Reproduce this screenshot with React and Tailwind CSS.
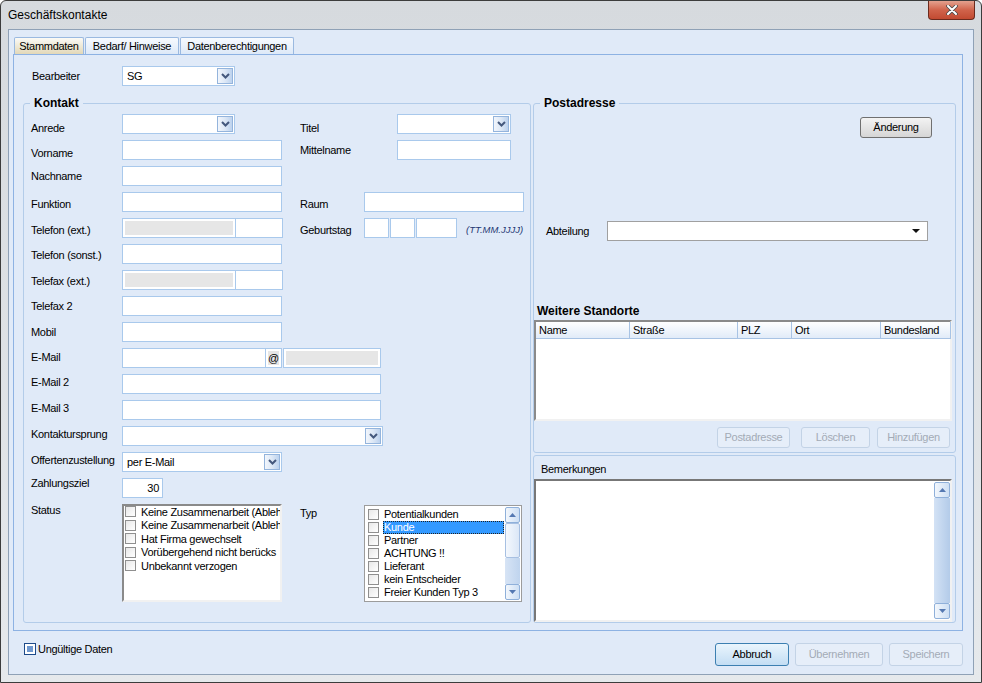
import React from "react";

function Chevron() {
  return (
    <span className="flex h-[16px] w-[16px] shrink-0 items-center justify-center border border-[#94b4dc] bg-gradient-to-r from-[#f2f6fc] via-[#dde8f6] to-[#bcd2ee]">
      <svg width="9" height="6" viewBox="0 0 9 6">
        <path d="M1 1 L4.5 4.5 L8 1" fill="none" stroke="#44587d" strokeWidth="2" />
      </svg>
    </span>
  );
}

function Combo({ className = "", value }) {
  return (
    <div className={`flex h-5 shrink-0 items-center justify-between border border-[#a9c9ec] bg-white pl-[4px] pr-px ${className}`}>
      <span className="leading-none">{value}</span>
      <Chevron />
    </div>
  );
}

function Field({ className = "" }) {
  return <div className={`h-5 shrink-0 border border-[#a9c9ec] bg-white ${className}`} />;
}

function GrayField({ className = "" }) {
  return (
    <div className={`h-5 shrink-0 border border-[#a9c9ec] bg-white p-[2px] ${className}`}>
      <div className="h-full bg-[#e6e6e6]" />
    </div>
  );
}

function Split() {
  return (
    <div className="flex">
      <GrayField className="w-[114px]" />
      <Field className="-ml-px w-[48px]" />
    </div>
  );
}

function Label({ className = "", w = "w-[91px]", children }) {
  return (
    <div className={`shrink-0 whitespace-nowrap leading-[20px] ${w} ${className}`}>
      {children}
    </div>
  );
}

function Arrow({ dir }) {
  return (
    <svg width="7" height="4" viewBox="0 0 7 4">
      <path d={dir === "up" ? "M0 4 L3.5 0 L7 4 Z" : "M0 0 L3.5 4 L7 0 Z"} fill="#5579b2" />
    </svg>
  );
}

function SbButton({ dir }) {
  return (
    <div className="flex h-[16px] w-full shrink-0 items-center justify-center rounded-[2px] border border-[#8fb0da] bg-gradient-to-r from-[#f3f7fc] to-[#cddff4]">
      <Arrow dir={dir} />
    </div>
  );
}

function Box() {
  return (
    <span className="mr-[5px] h-[11px] w-[11px] shrink-0 border border-[#8f8f8f] bg-gradient-to-br from-[#e8e8e8] to-white" />
  );
}

// the list is narrower than the entries, the rest is cut off like in the app
const statusItems = [
  "Keine Zusammenarbeit (Ableh",
  "Keine Zusammenarbeit (Ableh ",
  "Hat Firma gewechselt",
  "Vorübergehend nicht berücks",
  "Unbekannt verzogen",
];

const typItems = [
  "Potentialkunden",
  "Kunde",
  "Partner",
  "ACHTUNG !!",
  "Lieferant",
  "kein Entscheider",
  "Freier Kunden Typ 3",
];

function Legend({ children }) {
  return (
    <legend className="ml-[6px] px-[4px] text-[12px] font-bold leading-[14px] tracking-normal">
      {children}
    </legend>
  );
}

function Btn({ className = "", disabled, children }) {
  return (
    <div
      className={`flex shrink-0 items-center justify-center rounded-[3px] border ${
        disabled
          ? "border-[#c3d3e6] bg-[#e6eef9] text-[#a3abb6]"
          : "border-[#707070] bg-gradient-to-b from-[#f3f3f3] to-[#d6d6d6]"
      } ${className}`}
    >
      {children}
    </div>
  );
}

export default function App() {
  return (
    <div className="flex h-[683px] w-[982px] flex-col rounded-t-[6px] border border-[#3c3c3c] bg-gradient-to-b from-[#d6dade] to-[#e6e9ec] font-['Liberation_Sans',Arial,sans-serif] text-[11px] tracking-[-0.3px] text-black">
      {/* Title bar */}
      <div className="flex h-[28px] shrink-0 justify-between">
        <div className="self-center pl-[7px] text-[12px] tracking-normal">Geschäftskontakte</div>
        <div className="mr-[6px] flex h-[19px] w-[47px] items-center justify-center rounded-b-[4px] border border-t-0 border-[#6b2a1d] bg-gradient-to-b from-[#e3a18f] via-[#d0634b] to-[#c24a31]">
          <svg width="12" height="10" viewBox="0 0 12 10">
            <path d="M2 1 L10 9 M10 1 L2 9" stroke="#4a4a4a" strokeWidth="3.6" strokeLinecap="round" />
            <path d="M2 1 L10 9 M10 1 L2 9" stroke="#ffffff" strokeWidth="2" strokeLinecap="round" />
          </svg>
        </div>
      </div>

      {/* Client */}
      <div className="mx-[7px] mb-[7px] flex flex-1 flex-col border border-[#8fa1b6] bg-[#e0eaf8]">
        {/* Tabs */}
        <div className="flex gap-px pl-[5px] pt-[7px]">
          <div className="flex h-[17px] w-[70px] items-center justify-center rounded-t-[2px] border border-b-0 border-[#9ab9e0] bg-gradient-to-b from-[#fbfaf6] to-[#e2d8b8]">
            Stammdaten
          </div>
          <div className="flex h-[17px] w-[94px] items-center justify-center rounded-t-[2px] border border-b-0 border-[#9ab9e0] bg-gradient-to-b from-[#f7fafe] to-[#dde9f8]">
            Bedarf/ Hinweise
          </div>
          <div className="flex h-[17px] w-[114px] items-center justify-center rounded-t-[2px] border border-b-0 border-[#9ab9e0] bg-gradient-to-b from-[#f7fafe] to-[#dde9f8]">
            Datenberechtigungen
          </div>
        </div>

        {/* Tab panel */}
        <div className="ml-[4px] flex h-[577px] w-[950px] flex-col border border-[#8db2e3] bg-[#e0eaf8] pl-[9px] pr-[6px] pt-[11px]">
          {/* Bearbeiter */}
          <div className="flex h-5 items-start pl-[9px]">
            <Label w="w-[90px]">Bearbeiter</Label>
            <Combo className="w-[113px]" value="SG" />
          </div>

          <div className="mt-[10px] flex gap-[2px]">
            {/* Kontakt */}
            <fieldset className="h-[527px] w-[508px] rounded-[3px] border border-[#b3cce9] p-0">
              <Legend>Kontakt</Legend>
              <div className="flex flex-col gap-[6px] pl-[7px] pt-[4px]">
                <div className="flex h-5 items-start">
                  <Label className="pt-[4px]">Anrede</Label>
                  <div className="w-[178px] shrink-0">
                    <Combo className="w-[113px]" />
                  </div>
                  <Label w="w-[97px]" className="pt-[4px]">Titel</Label>
                  <Combo className="w-[114px]" />
                </div>
                <div className="flex h-5 items-start">
                  <Label className="pt-[3px]">Vorname</Label>
                  <div className="w-[178px] shrink-0">
                    <Field className="w-[160px]" />
                  </div>
                  <Label w="w-[97px]">Mittelname</Label>
                  <Field className="w-[114px]" />
                </div>
                <div className="flex h-5 items-start">
                  <Label>Nachname</Label>
                  <Field className="w-[160px]" />
                </div>
                <div className="flex h-5 items-start">
                  <Label className="pt-[2px]">Funktion</Label>
                  <div className="w-[178px] shrink-0">
                    <Field className="w-[160px]" />
                  </div>
                  <Label w="w-[64px]" className="pt-[2px]">Raum</Label>
                  <Field className="w-[160px]" />
                </div>
                <div className="flex h-5 items-start">
                  <Label className="pt-[2px]">Telefon (ext.)</Label>
                  <div className="w-[178px] shrink-0">
                    <Split />
                  </div>
                  <Label w="w-[64px]" className="pt-[2px]">Geburtstag</Label>
                  <div className="flex gap-px">
                    <Field className="w-[25px]" />
                    <Field className="w-[25px]" />
                    <Field className="w-[41px]" />
                  </div>
                  <span className="ml-[9px] pt-[2px] text-[9.5px] italic leading-[20px] tracking-normal text-[#1e3773]">
                    (TT.MM.JJJJ)
                  </span>
                </div>
                <div className="flex h-5 items-start">
                  <Label className="pt-px">Telefon (sonst.)</Label>
                  <Field className="w-[160px]" />
                </div>
                <div className="flex h-5 items-start">
                  <Label className="pt-px">Telefax (ext.)</Label>
                  <Split />
                </div>
                <div className="flex h-5 items-start">
                  <Label>Telefax 2</Label>
                  <Field className="w-[160px]" />
                </div>
                <div className="flex h-5 items-start">
                  <Label>Mobil</Label>
                  <Field className="w-[160px]" />
                </div>
                <div className="flex h-5 items-start">
                  <Label className="-mt-px">E-Mail</Label>
                  <Field className="w-[144px]" />
                  <div className="h-5 w-[16px] shrink-0 border-y border-r border-[#a9c9ec] bg-white p-[2px]">
                    <div className="flex h-full items-center justify-center bg-[#e6e6e6] tracking-normal">@</div>
                  </div>
                  <GrayField className="ml-px w-[98px]" />
                </div>
                <div className="flex h-5 items-start">
                  <Label className="-mt-[2px]">E-Mail 2</Label>
                  <Field className="w-[259px]" />
                </div>
                <div className="flex h-5 items-start">
                  <Label className="-mt-[2px]">E-Mail 3</Label>
                  <Field className="w-[259px]" />
                </div>
                <div className="flex h-5 items-start">
                  <Label className="-mt-[2px]">Kontaktursprung</Label>
                  <Combo className="w-[261px]" />
                </div>
                <div className="flex h-5 items-start">
                  <Label className="-mt-[2px]">Offertenzustellung</Label>
                  <Combo className="w-[160px]" value="per E-Mail" />
                </div>
                <div className="flex h-5 items-start">
                  <Label className="-mt-[5px]">Zahlungsziel</Label>
                  <div className="flex h-5 w-[41px] items-center justify-end border border-[#a9c9ec] bg-white pr-[3px]">
                    30
                  </div>
                </div>
                <div className="flex items-start">
                  <Label className="!leading-[13px]">Status</Label>
                  <div className="w-[178px] shrink-0">
                    <div className="h-[98px] w-[160px] overflow-hidden border-2 border-b-[#f1f1f1] border-l-[#8a8a8a] border-r-[#f1f1f1] border-t-[#8a8a8a] bg-white pl-px">
                      <div className="-mt-px">
                        {statusItems.map((s, i) => (
                          <div key={i} className="flex h-[13.5px] items-center overflow-hidden whitespace-nowrap">
                            <Box />
                            <span>{s}</span>
                          </div>
                        ))}
                      </div>
                    </div>
                  </div>
                  <Label w="w-[64px]" className="pt-[3px] !leading-[13px]">Typ</Label>
                  <div className="mt-px flex h-[97px] w-[158px] border border-[#9c9c9c] bg-white">
                    <div className="flex-1 overflow-hidden pl-[3px] pt-[2px]">
                      {typItems.map((s) => (
                        <div key={s} className="flex h-[13px] items-center whitespace-nowrap">
                          <Box />
                          <span
                            className={
                              s === "Kunde"
                                ? "-ml-px flex h-[13px] flex-1 items-center border border-dotted border-[#222] bg-[#3399ff] text-white"
                                : ""
                            }
                          >
                            {s}
                          </span>
                        </div>
                      ))}
                    </div>
                    <div className="ml-px flex w-[16px] flex-col py-px pr-px">
                      <SbButton dir="up" />
                      <div className="h-[35px] rounded-[2px] border border-[#a7c0e2] bg-gradient-to-r from-[#f4f8fd] to-[#dbe7f7]" />
                      <div className="flex-1 bg-gradient-to-r from-[#d7e4f5] to-[#bfd4ee]" />
                      <SbButton dir="down" />
                    </div>
                  </div>
                </div>
              </div>
            </fieldset>

            {/* Right column */}
            <div className="flex w-[423px] flex-col gap-[2px]">
              <fieldset className="h-[357px] rounded-[3px] border border-[#b3cce9] p-0">
                <Legend>Postadresse</Legend>
                <div className="flex flex-col">
                  <div className="flex justify-end pr-[23px] pt-[7px]">
                    <Btn className="h-[21px] w-[72px]">Änderung</Btn>
                  </div>
                  <div className="mt-[83px] flex h-5 items-start pl-[12px]">
                    <Label w="w-[61px]">Abteilung</Label>
                    <div className="flex h-5 w-[321px] items-center justify-end border border-[#a0a0a0] bg-white pr-[7px]">
                      <svg width="8" height="4" viewBox="0 0 8 4">
                        <path d="M0 0 L8 0 L4 4 Z" fill="#111" />
                      </svg>
                    </div>
                  </div>
                  <div className="mt-[63px] pl-[3px] text-[12px] font-bold leading-[15px] tracking-normal">
                    Weitere Standorte
                  </div>
                  <div className="mt-px h-[101px] w-[418px] border-2 border-b-[#f1f1f1] border-l-[#8a8a8a] border-r-[#f1f1f1] border-t-[#8a8a8a] bg-white">
                    <div className="flex h-[17px] bg-gradient-to-b from-white to-[#dfeaf8]">
                      {[
                        ["Name", "w-[94px]"],
                        ["Straße", "w-[108px]"],
                        ["PLZ", "w-[54px]"],
                        ["Ort", "w-[89px]"],
                        ["Bundesland", "w-[70px]"],
                      ].map(([t, w]) => (
                        <div
                          key={t}
                          className={`flex shrink-0 items-center border-b border-r border-[#a8c3e4] pl-[3px] ${w}`}
                        >
                          {t}
                        </div>
                      ))}
                    </div>
                  </div>
                  <div className="mt-[6px] flex justify-end gap-[7px] pr-[5px]">
                    <Btn disabled className="mr-[4px] h-[21px] w-[73px]">Postadresse</Btn>
                    <Btn disabled className="h-[21px] w-[69px]">Löschen</Btn>
                    <Btn disabled className="h-[21px] w-[73px]">Hinzufügen</Btn>
                  </div>
                </div>
              </fieldset>

              <div className="flex h-[168px] flex-col rounded-[3px] border border-[#b3cce9]">
                <div className="pl-[7px] pt-[7px] leading-[13px]">Bemerkungen</div>
                <div className="mt-[3px] flex h-[143px] w-[418px] justify-end border-2 border-b-[#f1f1f1] border-l-[#777] border-r-[#f1f1f1] border-t-[#777] bg-white py-px">
                  <div className="flex w-[16px] flex-col">
                    <SbButton dir="up" />
                    <div className="flex-1 bg-gradient-to-r from-[#d3e2f5] to-[#b3cbe9]" />
                    <SbButton dir="down" />
                  </div>
                </div>
              </div>
            </div>
          </div>
        </div>

        {/* Bottom bar */}
        <div className="flex items-start justify-between pl-[15px] pr-[10px] pt-[12px]">
          <div className="flex items-center">
            <span className="flex h-[12px] w-[12px] border border-[#1d4a8a] bg-white p-[2px]">
              <span className="flex-1 bg-[#6f98cf]" />
            </span>
            <span className="ml-[2px] leading-[12px]">Ungültige Daten</span>
          </div>
          <div className="flex gap-[6px]">
            <div className="flex h-[23px] w-[74px] items-center justify-center rounded-[3px] border border-[#3c7fb1] bg-gradient-to-b from-[#eaf5fd] to-[#c3ddf3]">
              Abbruch
            </div>
            <Btn disabled className="h-[23px] w-[88px]">Übernehmen</Btn>
            <Btn disabled className="h-[23px] w-[74px]">Speichern</Btn>
          </div>
        </div>
      </div>
    </div>
  );
}
